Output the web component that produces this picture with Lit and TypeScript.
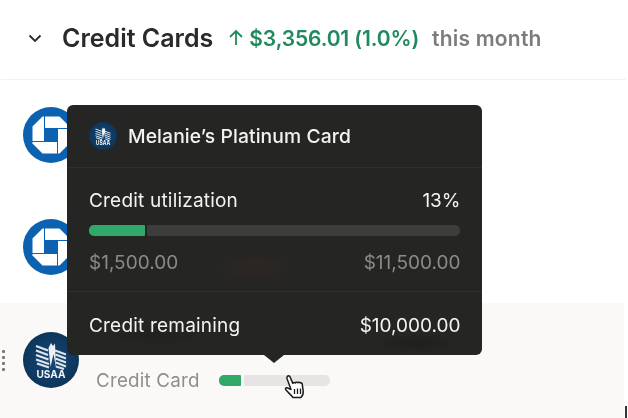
import { LitElement, html, css, svg } from "lit";
import { customElement } from "lit/decorators.js";

const chase = () => {
  const piece = "M-6-18.500H8.500L18.500-8.500V-7H-6Z";
  return html`<svg class="logo" viewBox="-28 -28 56 56" aria-hidden="true">
    <circle r="28" fill="#0a62b0"></circle>
    ${[0, 90, 180, 270].map(
      (a) => svg`<path d=${piece} fill="#fff" transform="rotate(${a})"></path>`
    )}
  </svg>`;
};

const usaa = (cls: string) => html`<svg class=${cls} viewBox="0 0 56 56" aria-hidden="true">
  <defs>
    <radialGradient id="usaa-bg">
      <stop offset="0" stop-color="#15497a"></stop>
      <stop offset="1" stop-color="#0d3559"></stop>
    </radialGradient>
  </defs>
  <circle cx="28" cy="28" r="28" fill="url(#usaa-bg)"></circle>
  <g fill="none" stroke="#dfe5ea" stroke-width="2">
    <path d="M13 14 L25 18.500"></path>
    <path d="M13 18.500 L25 23"></path>
    <path d="M13 23 L25.500 27.500"></path>
    <path d="M13 27.500 L26 32"></path>
    <path d="M14 31.500 L26 35.500"></path>
    <path d="M32 18.500 L43 22.500"></path>
    <path d="M32.500 22.500 L43 26.500"></path>
    <path d="M32.500 26.500 L43 30.500"></path>
    <path d="M33 30.500 L43 34.500"></path>
    <path d="M33 34.500 L41 37"></path>
  </g>
  <path d="M25.500 16 L28 11 L30 14 L32 11.500 L33 36 L30.500 22 L27.500 35 Z" fill="#eef1f4"></path>
  <text x="28" y="46" text-anchor="middle" textLength="29" lengthAdjust="spacingAndGlyphs" class="usaa">USAA</text>
</svg>`;

@customElement("app-root")
export class AppRoot extends LitElement {
  static styles = css`
    :host {
      display: block;
      width: 628px;
      height: 418px;
      background: #fff;
      font-family: Inter, "Liberation Sans", sans-serif;
      overflow: hidden;
    }
    .page {
      position: relative;
      width: 628px;
      height: 418px;
      filter: blur(0.4px);
    }
    .head {
      box-sizing: border-box;
      height: 80px;
      width: 625px;
      margin-left: 1px;
      padding: 0 0 3px 26px;
      display: flex;
      align-items: center;
      border-bottom: 1px solid #f3f2f0;
      font-size: 21px;
      font-weight: 600;
      white-space: nowrap;
    }
    .chev {
      width: 16px;
      height: 16px;
      margin-right: 19px;
    }
    .title {
      font-size: 25px;
      color: #2a2a2a;
      margin-right: 15px;
    }
    .arrow {
      width: 16px;
      height: 18px;
      margin-right: 5px;
    }
    .delta {
      color: #218a5d;
      margin-right: 13px;
      font-weight: 600;
      letter-spacing: -0.13px;
    }
    .month {
      color: #7d7c7b;
      letter-spacing: 0.2px;
    }
    .row {
      box-sizing: border-box;
      width: 624px;
      height: 112px;
      padding-left: 23px;
      display: flex;
      align-items: center;
    }
    .row.active {
      position: relative;
      height: 115px;
      padding-bottom: 2px;
      background: #faf9f7;
    }
    .row.first {
      padding-bottom: 2px;
    }
    .row.second {
      height: 111px;
      padding-bottom: 1px;
    }
    .logo {
      width: 56px;
      height: 56px;
      flex: none;
    }
    .logo-sm {
      width: 28px;
      height: 28px;
      flex: none;
      margin-right: 11px;
    }
    .usaa {
      font: 700 11px Inter, "Liberation Sans", sans-serif;
      fill: #f2f4f6;
    }
    .grip {
      position: absolute;
      left: 2px;
      top: 47px;
      display: grid;
      gap: 3.5px;
    }
    .grip i {
      width: 2.5px;
      height: 2.5px;
      background: #777;
      border-radius: 1px;
    }
    .meta {
      align-self: flex-end;
      display: flex;
      align-items: center;
      margin: 0 0 24px 17px;
      font-size: 18.800px;
      letter-spacing: 0.2px;
      color: #8f8e8d;
    }
    .mini {
      display: flex;
      gap: 3px;
      margin-left: 19px;
      width: 111px;
      height: 11px;
    }
    .mini b {
      display: block;
      width: 22px;
      background: #2fa868;
      border-radius: 5px 1px 1px 5px;
    }
    .mini span {
      flex: 1;
      background: #e6e5e3;
      border-radius: 1px 5px 5px 1px;
    }
    .tip {
      position: absolute;
      left: 67px;
      top: 105px;
      width: 415px;
      height: 250px;
      box-sizing: border-box;
      border-radius: 6px;
      color: #f4f3f2;
      background:
        radial-gradient(ellipse 50px 18px at 188px 162px, rgba(70, 45, 30, 0.22), transparent),
        radial-gradient(ellipse 50px 12px at 90px 230px, rgba(10, 10, 10, 0.16), transparent),
        radial-gradient(ellipse 40px 10px at 350px 238px, rgba(10, 10, 10, 0.25), transparent),
        #252524;
      font-size: 19px;
      display: flex;
      flex-direction: column;
    }
    .tip::after {
      content: "";
      position: absolute;
      left: 197px;
      bottom: -8px;
      border: 10px solid transparent;
      border-bottom: 0;
      border-top: 8px solid #252524;
    }
    .tip-head {
      box-sizing: border-box;
      height: 63px;
      display: flex;
      align-items: center;
      padding: 0 22px 1px;
      border-bottom: 1px solid #2f2f2e;
      font-weight: 500;
      font-size: 19.300px;
      letter-spacing: 0.1px;
    }
    .tip-body {
      box-sizing: border-box;
      height: 124px;
      padding: 21px 21.500px 0 22px;
      border-bottom: 1px solid #2f2f2e;
    }
    .line {
      display: flex;
      justify-content: space-between;
    }
    .label {
      letter-spacing: 0.2px;
    }
    .bar {
      display: flex;
      gap: 2px;
      height: 11px;
      margin: 13px 0.500px 15px 0;
    }
    .bar b {
      display: block;
      width: 56px;
      background: #31a96a;
      border-radius: 5px 1px 1px 5px;
    }
    .bar span {
      flex: 1;
      background: #3d3d3b;
      border-radius: 1px 5px 5px 1px;
    }
    .muted {
      color: #8b8a88;
    }
    .tip-foot {
      padding: 22px 21.500px 0 22px;
    }
    .hand {
      position: absolute;
      left: 283px;
      top: 374px;
      width: 24px;
      height: 26px;
    }
    .edge {
      position: absolute;
      left: 625px;
      top: 406px;
      width: 2px;
      height: 12px;
      background: #333;
    }
  `;

  render() {
    return html`<div class="page">
      <header class="head">
        <svg class="chev" viewBox="0 0 16 16" fill="none" stroke="#2a2a2a" stroke-width="1.8" aria-hidden="true">
          <path d="M2.500 5.500 8 11l5.500-5.500"></path>
        </svg>
        <span class="title">Credit Cards</span>
        <svg class="arrow" viewBox="0 0 16 18" fill="none" stroke="#218a5d" stroke-width="1.8" aria-hidden="true">
          <path d="M8 16V2.500M2 8l6-6 6 6"></path>
        </svg>
        <span class="delta">$3,356.01 (1.0%)</span>
        <span class="month">this month</span>
      </header>
      <div class="row first">${chase()}</div>
      <div class="row second">${chase()}</div>
      <div class="row active">
        <div class="grip"><i></i><i></i><i></i><i></i></div>
        ${usaa("logo")}
        <div class="meta">
          Credit Card
          <div class="mini"><b></b><span></span></div>
        </div>
      </div>
      <section class="tip">
        <div class="tip-head">${usaa("logo-sm")}Melanie’s Platinum Card</div>
        <div class="tip-body">
          <div class="line"><span class="label">Credit utilization</span><span>13%</span></div>
          <div class="bar"><b></b><span></span></div>
          <div class="line muted"><span>$1,500.00</span><span>$11,500.00</span></div>
        </div>
        <div class="tip-foot">
          <div class="line"><span class="label">Credit remaining</span><span>$10,000.00</span></div>
        </div>
      </section>
      <svg class="hand" viewBox="0 0 24 26" aria-hidden="true">
        <path
          d="M4.500 2.200c1-.7 2.200-.2 2.700 1l2.600 6.200c.4-1 1.700-1.200 2.500-.5.4-.9 1.800-1 2.500-.2.6-.7 1.900-.6 2.400.3.7-.4 1.700 0 2 .9l1 7.200c.3 2.800-.8 5-2.300 6.400H10c-1.200-1.600-3-3.400-5-5.400-1.600-1.500-3-2.700-2.500-3.800.5-1 2-.8 3.300.2L8 15.500 4 4.500c-.2-.9-.1-1.700.5-2.300Z"
          fill="#fff"
          stroke="#1b1b1b"
          stroke-width="1.500"
          stroke-linejoin="round"
        ></path>
        <path d="M11.500 15v5M14.500 14.500v5.500M17.500 14.500v5.500" stroke="#1b1b1b" stroke-width="1.300" fill="none"></path>
      </svg>
      <div class="edge"></div>
    </div>`;
  }
}
